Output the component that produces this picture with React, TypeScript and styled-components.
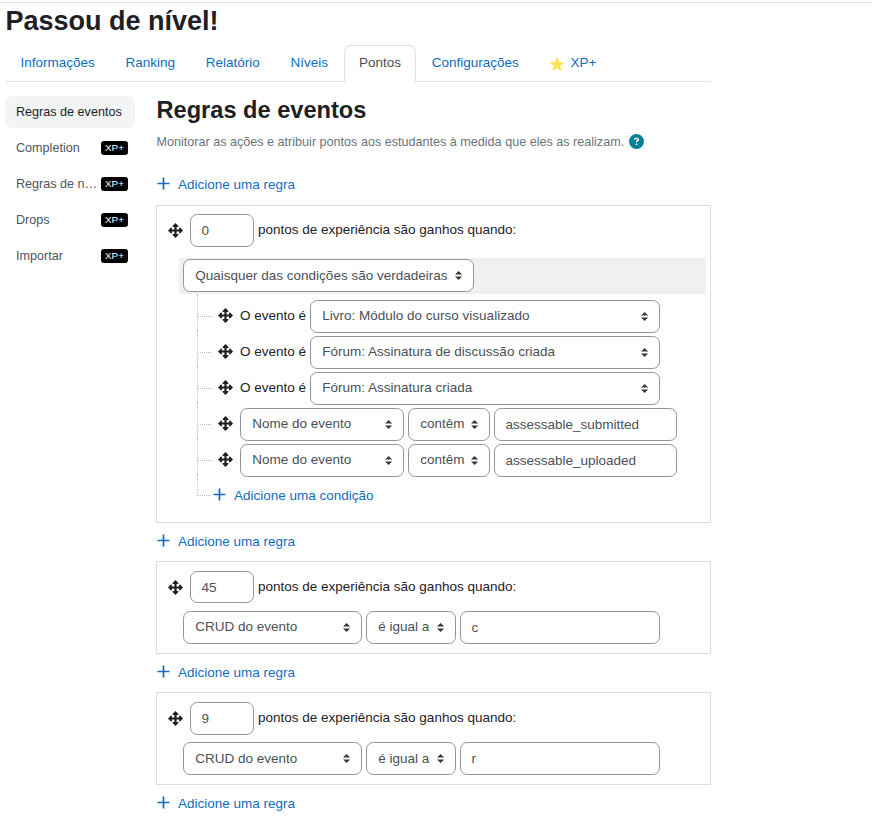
import React from 'react';
import styled, { createGlobalStyle } from 'styled-components';
import { FaCircleQuestion } from 'react-icons/fa6';

const GlobalStyle = createGlobalStyle`
  *, *::before, *::after { box-sizing: border-box; }
  body {
    margin: 0;
    background: #fff;
    color: #1d2125;
    font-family: "Liberation Sans", Arial, sans-serif;
    font-size: 13.5px;
    line-height: 20px;
  }
  a { color: #0f6cbf; text-decoration: none; }
  ul { list-style: none; margin: 0; padding: 0; }
`;

const Page = styled.div`
  height: 819px;
  overflow: hidden;
  padding-top: 2px;
`;

const PageBody = styled.div`
  border-top: 1px solid #dee2e6;
  padding-left: 5px;
`;

const PageTitle = styled.h1`
  margin: 0;
  height: 42px;
  padding: 1px 0 0 0.5px;
  font-size: 27px;
  font-weight: 700;
  line-height: 35px;
`;

const Tabs = styled.nav`
  display: flex;
  width: 706px;
  height: 37px;
  border-bottom: 1px solid #dee2e6;
`;

const Tab = styled.a<{ $active?: boolean }>`
  display: flex;
  align-items: center;
  height: 37px;
  padding: 0 14.4px 2px;
  border: 1px solid ${p => (p.$active ? '#dee2e6' : 'transparent')};
  border-bottom-color: ${p => (p.$active ? '#fff' : 'transparent')};
  border-radius: 7px 7px 0 0;
  color: ${p => (p.$active ? '#495057' : '#0f6cbf')};
  background: ${p => (p.$active ? '#fff' : 'transparent')};
`;

const StarIcon = styled.svg`
  width: 16px;
  height: 16px;
  margin: 2px 6px 0 -1px;
  fill: #fde25a;
`;

const Columns = styled.div`
  display: flex;
  gap: 21px;
  padding-top: 14px;
`;

const SideNav = styled.nav`
  display: flex;
  flex-direction: column;
  gap: 4px;
  width: 130px;
`;

const SideItem = styled.a<{ $active?: boolean }>`
  display: flex;
  align-items: center;
  justify-content: space-between;
  gap: 3px;
  height: 32px;
  padding: 0 7px 0 11px;
  border-radius: 6px;
  font-size: 12.6px;
  color: ${p => (p.$active ? '#1d2125' : '#4b5563')};
  background: ${p => (p.$active ? '#f3f4f6' : 'transparent')};
`;

const SideLabel = styled.span`
  overflow: hidden;
  white-space: nowrap;
  text-overflow: ellipsis;
`;

const Badge = styled.span`
  flex: none;
  width: 27px;
  height: 14px;
  border-radius: 3px;
  background: #000;
  color: #fff;
  font-size: 9.9px;
  line-height: 14px;
  text-align: center;
`;

const Main = styled.main`
  width: 555px;
`;

const SectionTitle = styled.h2`
  margin: 0;
  height: 36px;
  padding-left: 0.5px;
  font-size: 23.6px;
  font-weight: 700;
  line-height: 28px;
`;

const Description = styled.p`
  display: flex;
  align-items: center;
  gap: 4.4px;
  margin: 0;
  height: 20px;
  padding-left: 0.5px;
  font-size: 12.6px;
  color: #6a737b;
`;

const HelpIcon = styled(FaCircleQuestion)`
  width: 15px;
  height: 15px;
  margin-top: -1px;
  color: #008196;
`;

const AddLink = styled.a`
  display: flex;
  align-items: center;
  gap: 8px;
`;

const AddRule = styled(AddLink)<{ $first?: boolean }>`
  height: ${p => (p.$first ? '22px' : '38px')};
  margin-top: ${p => (p.$first ? '22px' : '0')};
  margin-bottom: ${p => (p.$first ? '9px' : '0')};
  padding-left: 1px;
`;

const PlusIcon = styled.svg`
  width: 13px;
  height: 13px;
  margin-top: -3px;
  fill: none;
  stroke: #0f6cbf;
  stroke-width: 1.7;
`;

const RuleCard = styled.section<{ $height: number }>`
  height: ${p => p.$height}px;
  padding: ${p => (p.$height > 100 ? '8px' : '9px')} 4px 0 11px;
  border: 1px solid #dadcdd;
`;

const PointsRow = styled.div`
  display: flex;
  align-items: flex-start;
  height: 33px;
`;

const MoveSvg = styled.svg`
  flex: none;
  width: 15px;
  height: 15px;
  fill: #1d2125;
`;

const PointsLabel = styled.span`
  margin: 6px 0 0 4px;
`;

const PointsHandle = styled.span`
  display: flex;
  margin-top: 9px;
`;

const TextInput = styled.input<{ $width: number; $height?: number }>`
  width: ${p => p.$width}px;
  height: ${p => p.$height ?? 33}px;
  padding: 0 10.4px;
  border: 1px solid #8f959e;
  border-radius: 7.2px;
  background: #fff;
  color: #495057;
  font: inherit;
`;

const PointsInput = styled(TextInput)`
  margin-left: 7px;
`;

const SelectBox = styled.div<{ $width: number }>`
  position: relative;
  flex: none;
  width: ${p => p.$width}px;
  height: 33px;
`;

const SelectControl = styled.select<{ $low?: boolean }>`
  width: 100%;
  height: 33px;
  padding: 0 20px ${p => (p.$low ? '0' : '2px')} 11.3px;
  border: 1px solid #8f959e;
  border-radius: 7.2px;
  background: #fff;
  color: #495057;
  font: inherit;
  appearance: none;
`;

const SelectArrows = styled.svg`
  position: absolute;
  top: 12px;
  right: 11.5px;
  width: 7.2px;
  height: 9px;
  fill: #343a40;
  pointer-events: none;
`;

const ConditionRow = styled.div`
  display: flex;
  gap: 4px;
  margin: 7px 0 0 15px;
`;

const GroupHeader = styled.div`
  height: 36px;
  margin: 11px 0 0 11px;
  padding: 1px 4px;
  background: #f0f0f0;
`;

const Tree = styled.ul`
  margin-left: 29px;
`;

const Branch = styled.li`
  display: flex;
  height: 36px;
`;

const Connector = styled.div<{ $last?: boolean }>`
  width: 14px;
  height: ${p => (p.$last ? '22px' : '36px')};
  border-left: 1px dotted #bbb;
  &::before {
    content: '';
    display: block;
    height: ${p => (p.$last ? '22px' : '23px')};
    border-bottom: 1px dotted #bbb;
  }
`;

const BranchContent = styled.div`
  display: flex;
  align-items: center;
  gap: 4px;
  height: 33px;
  margin: 6px 0 0 7px;
  & > svg { margin: -2px 3px 0 0; }
`;

const EventLabel = styled.span`
  width: 66px;
  margin-top: -2px;
  white-space: nowrap;
`;

const AddCondition = styled(AddLink)`
  height: 20px;
  margin: 12px 0 0 2px;
`;

const Plus = () => (
  <PlusIcon viewBox="0 0 13 13" aria-hidden="true">
    <path d="M6.5 .5v12M.5 6.5h12" />
  </PlusIcon>
);

const MoveIcon = () => (
  <MoveSvg viewBox="0 0 15 15" aria-hidden="true">
    <path d="M7.5 0 10.4 2.9Q10.8 3.9 9.8 3.9H8.6V6.4H11.1V5.2Q11.1 4.2 12.1 4.6L15 7.5 12.1 10.4Q11.1 10.8 11.1 9.8V8.6H8.6V11.1H9.8Q10.8 11.1 10.4 12.1L7.5 15 4.6 12.1Q4.2 11.1 5.2 11.1H6.4V8.6H3.9V9.8Q3.9 10.8 2.9 10.4L0 7.5 2.9 4.6Q3.9 4.2 3.9 5.2V6.4H6.4V3.9H5.2Q4.2 3.9 4.6 2.9Z" />
  </MoveSvg>
);

const Select = ({ value, width, low }: { value: string; width: number; low?: boolean }) => (
  <SelectBox $width={width}>
    <SelectControl $low={low} defaultValue={value}>
      <option>{value}</option>
    </SelectControl>
    <SelectArrows viewBox="0 0 4 5" preserveAspectRatio="none" aria-hidden="true">
      <path d="M2 0L0 2h4zm0 5L0 3h4z" />
    </SelectArrows>
  </SelectBox>
);

const Points = ({ value, inputHeight }: { value: string; inputHeight?: number }) => (
  <PointsRow>
    <PointsHandle><MoveIcon /></PointsHandle>
    <PointsInput $width={64} $height={inputHeight} defaultValue={value} />
    <PointsLabel>pontos de experiência são ganhos quando:</PointsLabel>
  </PointsRow>
);

type SimpleRuleProps = { points: string; value: string; low?: boolean; inputHeight?: number };

const SimpleRule = ({ points, value, low, inputHeight }: SimpleRuleProps) => (
  <RuleCard $height={93}>
    <Points value={points} inputHeight={inputHeight} />
    <ConditionRow>
      <Select value="CRUD do evento" width={179} low={low} />
      <Select value="é igual a" width={90} low={low} />
      <TextInput $width={200} defaultValue={value} />
    </ConditionRow>
  </RuleCard>
);

const tabs = ['Informações', 'Ranking', 'Relatório', 'Níveis', 'Pontos', 'Configurações'];
const lockedItems = ['Completion', 'Regras de n…', 'Drops', 'Importar'];
const events = [
  'Livro: Módulo do curso visualizado',
  'Fórum: Assinatura de discussão criada',
  'Fórum: Assinatura criada',
];
const names = ['assessable_submitted', 'assessable_uploaded'];

export default function App() {
  return (
    <Page>
      <GlobalStyle />
      <PageBody>
        <PageTitle>Passou de nível!</PageTitle>
        <Tabs>
          {tabs.map(t => (
            <Tab key={t} href="#" $active={t === 'Pontos'}>{t}</Tab>
          ))}
          <Tab href="#">
            <StarIcon viewBox="0 0 20 20" aria-hidden="true">
              <path d="M9.05 2.93c.3-.92 1.6-.92 1.9 0l1.52 4.67h4.9c.97 0 1.37 1.24.59 1.81l-3.97 2.88 1.52 4.67c.3.92-.76 1.69-1.54 1.12L10 15.2l-3.97 2.88c-.78.57-1.84-.2-1.54-1.12l1.52-4.67-3.97-2.88c-.78-.57-.38-1.81.59-1.81h4.9z" />
            </StarIcon>
            XP+
          </Tab>
        </Tabs>
        <Columns>
          <SideNav>
            <SideItem href="#" $active>Regras de eventos</SideItem>
            {lockedItems.map(item => (
              <SideItem href="#" key={item}>
                <SideLabel>{item}</SideLabel>
                <Badge>XP+</Badge>
              </SideItem>
            ))}
          </SideNav>
          <Main>
            <SectionTitle>Regras de eventos</SectionTitle>
            <Description>
              Monitorar as ações e atribuir pontos aos estudantes à medida que eles as realizam.
              <HelpIcon />
            </Description>
            <AddRule href="#" $first><Plus />Adicione uma regra</AddRule>
            <RuleCard $height={318}>
              <Points value="0" />
              <GroupHeader>
                <Select value="Quaisquer das condições são verdadeiras" width={291} low />
              </GroupHeader>
              <Tree>
                {events.map(e => (
                  <Branch key={e}>
                    <Connector />
                    <BranchContent>
                      <MoveIcon />
                      <EventLabel>O evento é</EventLabel>
                      <Select value={e} width={350} />
                    </BranchContent>
                  </Branch>
                ))}
                {names.map(n => (
                  <Branch key={n}>
                    <Connector />
                    <BranchContent>
                      <MoveIcon />
                      <Select value="Nome do evento" width={164} />
                      <Select value="contêm" width={82} />
                      <TextInput $width={183} defaultValue={n} />
                    </BranchContent>
                  </Branch>
                ))}
                <Branch>
                  <Connector $last />
                  <AddCondition href="#"><Plus />Adicione uma condição</AddCondition>
                </Branch>
              </Tree>
            </RuleCard>
            <AddRule href="#"><Plus />Adicione uma regra</AddRule>
            <SimpleRule points="45" value="c" inputHeight={32} />
            <AddRule href="#"><Plus />Adicione uma regra</AddRule>
            <SimpleRule points="9" value="r" low />
            <AddRule href="#"><Plus />Adicione uma regra</AddRule>
          </Main>
        </Columns>
      </PageBody>
    </Page>
  );
}
